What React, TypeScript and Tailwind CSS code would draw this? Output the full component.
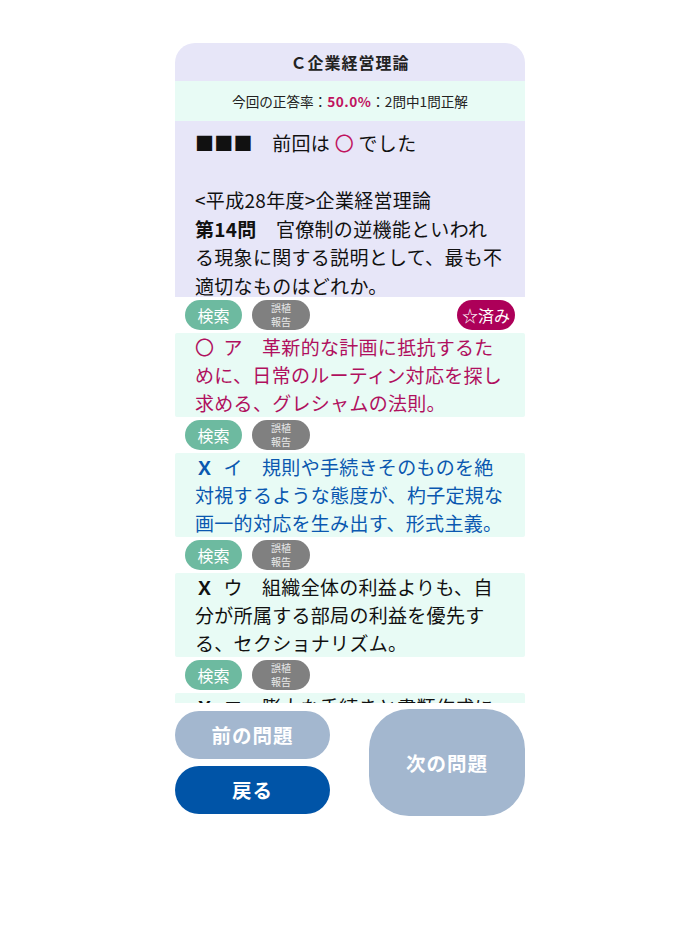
import React from 'react';

const FONT = { fontFamily: '"Noto Sans CJK JP", "Noto Sans", sans-serif' };

interface Choice {
    mark: string;
    label: string;
    text: string;
    tone: 'correct' | 'wrong' | 'plain';
}

const CHOICES: Choice[] = [
    { mark: '〇', label: 'ア', text: '革新的な計画に抵抗するために、日常のルーティン対応を探し求める、グレシャムの法則。', tone: 'correct' },
    { mark: 'Ｘ', label: 'イ', text: '規則や手続きそのものを絶対視するような態度が、杓子定規な画一的対応を生み出す、形式主義。', tone: 'wrong' },
    { mark: 'Ｘ', label: 'ウ', text: '組織全体の利益よりも、自分が所属する部局の利益を優先する、セクショナリズム。', tone: 'plain' },
    { mark: 'Ｘ', label: 'エ', text: '膨大な手続きと書類作成に追われ、本来の目的が見失われる、繁文縟礼。', tone: 'plain' },
];

function ToolRow({ done }: { done?: boolean }) {
    return (
        <div className="flex items-center gap-[10px] px-[10px] h-[36px]">
            <button className="h-[30px] w-[57px] rounded-full bg-[#6dbaa0] text-white text-[16px] leading-none">検索</button>
            <button className="h-[30px] w-[58px] rounded-full bg-[#808080] text-[#e8e8e8] text-[10px] leading-[14px] flex flex-col items-center justify-center">
                <span>誤植</span>
                <span>報告</span>
            </button>
            {done && (
                <button className="ml-auto h-[30px] w-[58px] rounded-full bg-[#ad0059] text-white text-[16px] leading-none">☆済み</button>
            )}
        </div>
    );
}

function ChoiceBox({ choice }: { choice: Choice }) {
    const color =
        choice.tone === 'correct' ? 'text-[#b0105e]' : choice.tone === 'wrong' ? 'text-[#0a58b0]' : 'text-[#111]';
    return (
        <div className={`bg-[#e8fbf5] rounded-[2px] pl-5 pr-5 text-[19px] tracking-[0.3px] leading-[28px] ${color}`}>
            <span className={choice.mark === 'Ｘ' ? 'font-bold' : ''}>{choice.mark}</span>
            &nbsp;&nbsp;{choice.label}　{choice.text}
        </div>
    );
}

export default function App() {
    return (
        <div className="min-h-[934px] bg-white flex justify-center pt-[43px]" style={FONT}>
            <div className="w-[350px]">
                <div className="h-[660px] overflow-hidden rounded-t-[20px]">
                    {/* title */}
                    <div className="h-[38px] bg-[#e7e6f8] flex items-center justify-center text-[16px] font-bold tracking-[1px] text-[#222]">
                        Ｃ企業経営理論
                    </div>
                    {/* rate */}
                    <div className="h-[40px] bg-[#e8fbf5] flex items-center justify-center text-[13.6px] text-[#222]">
                        今回の正答率：<span className="font-bold text-[#c0135f] tracking-[0.5px]">50.0%</span>：2問中1問正解
                    </div>
                    {/* question */}
                    <div className="h-[176px] bg-[#e7e6f8] pl-5 pr-5 pt-[8px] text-[19px] tracking-[0.3px] leading-[28.5px] text-[#111]">
                        <div>
                            ■■■　前回は <span className="text-[#c0135f]">〇</span> でした
                        </div>
                        <div>&nbsp;</div>
                        <div>&lt;平成28年度&gt;企業経営理論</div>
                        <div>
                            <span className="font-bold">第14問</span>　官僚制の逆機能といわれる現象に関する説明として、最も不適切なものはどれか。
                        </div>
                    </div>
                    <ToolRow done />
                    {CHOICES.map((c, i) => (
                        <div key={i}>
                            <ChoiceBox choice={c} />
                            {i < CHOICES.length - 1 && <ToolRow />}
                        </div>
                    ))}
                </div>

                {/* footer buttons */}
                <div className="flex justify-between mt-[6px]">
                    <div className="flex flex-col gap-[7px] w-[155px] mt-[2px]">
                        <button className="h-[48px] rounded-full bg-[#a3b7cf] text-white text-[19.5px] font-bold tracking-[1px]">前の問題</button>
                        <button className="h-[48px] rounded-full bg-[#0054a7] text-white text-[19.5px] font-bold tracking-[1px]">戻る</button>
                    </div>
                    <button className="w-[156px] h-[107px] rounded-[40px] bg-[#a3b7cf] text-white text-[19.5px] font-bold tracking-[1px]">次の問題</button>
                </div>
            </div>
        </div>
    );
}
